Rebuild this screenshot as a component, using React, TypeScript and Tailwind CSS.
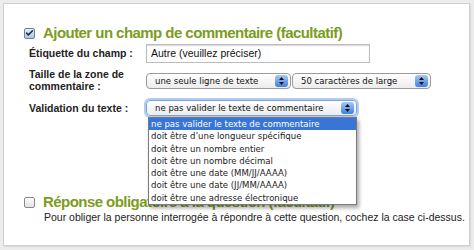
import { Check } from "lucide-react";

const OPTIONS = [
  "ne pas valider le texte de commentaire",
  "doit être d’une longueur spécifique",
  "doit être un nombre entier",
  "doit être un nombre décimal",
  "doit être une date (MM/JJ/AAAA)",
  "doit être une date (JJ/MM/AAAA)",
  "doit être une adresse électronique",
];

const LUCIDA = "font-['DejaVu_Sans_Condensed','DejaVu_Sans',sans-serif]";

function Stepper() {
  return (
    <span className="flex h-[12px] w-[13px] items-center justify-center rounded-[3px] bg-gradient-to-b from-[#a6c8f4] to-[#3d80df]">
      <svg width="5" height="8" viewBox="0 0 5 8" fill="#111">
        <path d="M2.5 0 L5 3 L0 3 Z" />
        <path d="M0 5 L5 5 L2.5 8 Z" />
      </svg>
    </span>
  );
}

function Select({
  value,
  width,
  focused = false,
}: {
  value: string;
  width: string;
  focused?: boolean;
}) {
  return (
    <div
      className={`flex h-[16px] items-center justify-between rounded-[4px] border bg-gradient-to-b from-white to-[#ececec] pl-[8px] pr-[2px] text-[9.5px] text-[#111] ${LUCIDA} ${width} ${
        focused
          ? "border-[#7aa4dc] shadow-[0_0_0_2px_#b4cdee]"
          : "border-[#9a9a9a]"
      }`}
    >
      <span className="whitespace-nowrap leading-none">{value}</span>
      <Stepper />
    </div>
  );
}

export default function App() {
  return (
    <div className="h-[250px] w-[474px] overflow-hidden bg-[#ececec] p-[3px] font-['Liberation_Sans',Arial,sans-serif]">
      <div className="relative h-[243px] w-[467px] border border-[#cfcfcf] bg-white shadow-[1px_1px_1px_#dcdcdc]">
        <div className="pl-[20px] pt-[20px]">
          {/* Commentaire */}
          <div className="flex h-[18px] items-center gap-[8px]">
            <span className="flex h-[11px] w-[11px] items-center justify-center rounded-[2px] border border-[#6d7f9c] bg-gradient-to-b from-[#e4eefa] to-[#a9c6ec] text-[#1a2a48]">
              <Check size={10} strokeWidth={4} />
            </span>
            <h2 className="text-[15px] font-bold leading-[18px] tracking-[-0.55px] text-[#7c9c1e]">
              Ajouter un champ de commentaire (facultatif)
            </h2>
          </div>

          <div className="mt-[2px] grid grid-cols-[117px_1fr] gap-y-[5px] pl-[5px] text-[10.5px] font-bold text-[#222]">
            <div className="flex h-[19px] items-center">Étiquette du champ :</div>
            <div className="flex h-[19px] w-[224px] items-center border border-[#bdbdbd] pl-[4px] text-[10.5px] font-normal text-[#111] shadow-[inset_0_1px_1px_#d8d8d8]">
              Autre (veuillez préciser)
            </div>

            <div className="h-[24px] leading-[12px]">
              Taille de la zone de
              <br />
              commentaire :
            </div>
            <div className="flex gap-[1px] pt-[5px] font-normal">
              <Select value="une seule ligne de texte" width="w-[145px]" />
              <Select value="50 caractères de large" width="w-[139px]" />
            </div>

            <div className="pt-[4px] leading-[14px]">Validation du texte :</div>
            <div className="relative pt-[3px] font-normal">
              <Select
                value="ne pas valider le texte de commentaire"
                width="w-[211px]"
                focused
              />
              <ul
                className={`absolute left-[2px] top-[20px] z-10 w-[209px] border border-[#7a7a7a] bg-white text-[9.5px] text-[#222] shadow-[2px_3px_4px_rgba(0,0,0,0.35)] ${LUCIDA}`}
              >
                {OPTIONS.map((o, i) => (
                  <li
                    key={o}
                    className={`h-[12.3px] whitespace-nowrap pl-[2px] leading-[12.3px] ${
                      i === 0 ? "bg-[#3875d7] text-white" : ""
                    }`}
                  >
                    {o}
                  </li>
                ))}
              </ul>
            </div>
          </div>

          {/* Réponse obligatoire */}
          <div className="mt-[77px] flex h-[18px] items-center gap-[8px]">
            <span className="h-[11px] w-[11px] rounded-[2px] border border-[#8a8a8a] bg-gradient-to-b from-white to-[#e2e2e2]" />
            <h2 className="text-[15px] font-bold leading-[18px] tracking-[-0.55px] text-[#7c9c1e]">
              Réponse obligatoire à la question (facultatif)
            </h2>
          </div>
          <p className="whitespace-nowrap pl-[20px] text-[10.5px] leading-[13px] text-[#222]">
            Pour obliger la personne interrogée à répondre à cette question,
            cochez la case ci-dessus.
          </p>
        </div>
      </div>
    </div>
  );
}
